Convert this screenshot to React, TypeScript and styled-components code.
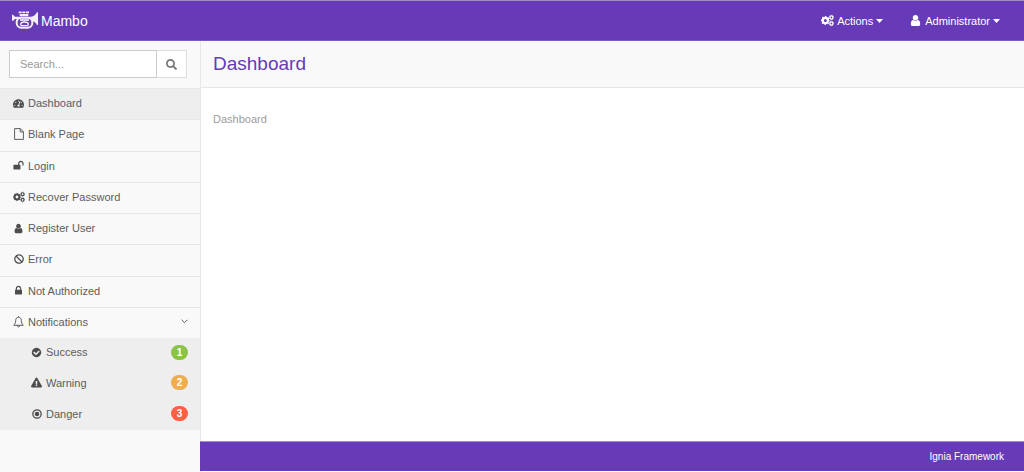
import React from 'react';
import styled, { createGlobalStyle } from 'styled-components';
import { FaTachometerAlt, FaBan, FaExclamationTriangle, FaSearch } from 'react-icons/fa';

const purple = '#673ab7';
const line = '#e7e7e7';

const GlobalStyle = createGlobalStyle`
  *, *::before, *::after { box-sizing: border-box; }
  body {
    margin: 0;
    background: #fff;
    color: #5c5c5c;
    font: 11px/16px "Liberation Sans", Arial, sans-serif;
  }
  button, input { font: inherit; color: inherit; }
  svg { display: block; flex: none; }
`;

const Page = styled.div`
  display: flex;
  flex-direction: column;
  min-height: 100vh;
`;

const TopBar = styled.header`
  display: flex;
  align-items: center;
  justify-content: space-between;
  height: 41px;
  padding: 0 24px 0 12px;
  border-top: 1px solid #a08fbc;
  border-bottom: 1px solid #7f58c2;
  background: ${purple};
  color: #fff;
`;

const Brand = styled.a`
  display: flex;
  align-items: center;
  gap: 3px;
  color: #fff;
  font-size: 14px;
  text-decoration: none;
`;

const TopMenu = styled.nav`
  display: flex;
  gap: 26px;
`;

const MenuButton = styled.button`
  display: flex;
  align-items: center;
  gap: 3px;
  padding: 0;
  border: 0;
  background: none;
  color: #fff;
  cursor: pointer;
`;

const Body = styled.div`
  display: flex;
  flex: 1;
`;

const Sidebar = styled.aside`
  width: 201px;
  flex: none;
  border-right: 1px solid ${line};
  background: #f9f9f9;
`;

const SearchForm = styled.form`
  display: flex;
  height: 47px;
  padding: 9px 13px 10px 9px;
`;

const SearchInput = styled.input`
  flex: 1;
  min-width: 0;
  padding: 0 10px;
  border: 1px solid #ccc;
  background: #fff;
  outline: none;

  &::placeholder { color: #999; opacity: 1; }
`;

const SearchButton = styled.button`
  display: grid;
  place-items: center;
  width: 30px;
  padding: 0;
  border: 1px solid #ddd;
  border-left: 0;
  background: #fff;
  color: #777;
`;

const NavList = styled.ul`
  display: grid;
  grid-auto-rows: 1fr;
  min-height: 250px;
  margin: 0;
  padding: 0;
  list-style: none;
`;

const SubList = styled(NavList)`
  min-height: 92px;
  background: #eee;
`;

const NavItem = styled.li`
  display: grid;
`;

const NavLink = styled.a<{ $active?: boolean }>`
  display: flex;
  align-items: center;
  gap: 4px;
  padding: 0 12px 2px 13px;
  border-top: 1px solid ${line};
  background: ${(p) => (p.$active ? '#eee' : 'transparent')};
  color: inherit;
  text-decoration: none;
`;

const SubLink = styled(NavLink)`
  padding-left: 31px;
  border-top: 0;
`;

const IconSlot = styled.span`
  display: grid;
  place-items: center;
  width: 11px;
  color: #4d4d4d;
`;

const Label = styled.span`
  flex: 1;
`;

const Badge = styled.span<{ $color: string }>`
  min-width: 17px;
  border-radius: 8px;
  background: ${(p) => p.$color};
  color: #fff;
  font-size: 10px;
  font-weight: 700;
  line-height: 15px;
  text-align: center;
`;

const Main = styled.main`
  display: flex;
  flex: 1;
  flex-direction: column;
  min-width: 0;
`;

const Heading = styled.h1`
  margin: 0;
  padding: 0 12px;
  border-bottom: 1px solid ${line};
  background: #f9f9f9;
  color: ${purple};
  font-size: 19px;
  font-weight: 400;
  line-height: 46px;
`;

const Content = styled.div`
  flex: 1;
  padding: 23px 12px;
  color: #9c9c9c;
`;

const Footer = styled.footer`
  margin: 0 0 1px -1px;
  padding: 0 20px;
  border-top: 1px solid #a58bd2;
  background: ${purple};
  color: #fff;
  font-size: 10px;
  line-height: 29px;
  text-align: right;
`;

const TrumpetLogo = () => (
  <svg width="26" height="20" viewBox="0 0 78 60" fill="none" stroke="#f3eefa" aria-hidden="true">
    <path d="M0 11h3l6 6h50c7-1 12-6 16-13h3v38h-3c-3-7-8-11-16-12V24H9l-5 5H0z" fill="#f3eefa" stroke="none" />
    <path d="M20 4h9M31 4h9M42 4h9" strokeWidth="5" />
    <path d="M23 12h26" strokeWidth="6" />
    <rect x="14" y="20" width="47" height="30" rx="14" fill="#673ab7" strokeWidth="6" />
    <path d="M24 27h27" strokeWidth="5" />
    <path d="M26 40c0-5 4-7 11-7s12 2 12 7-5 4-12 4-11 1-11-4z" strokeWidth="4" />
  </svg>
);

const PageIcon = () => (
  <svg width="10" height="12" viewBox="0 0 10 12" fill="none" stroke="currentColor" aria-hidden="true">
    <path d="M6.3.6H.6v10.8h8.8V3.7zM6.2.6v3.3h3.2" strokeWidth=".9" />
  </svg>
);

const BellIcon = () => (
  <svg width="11" height="12" viewBox="0 0 11 12" fill="none" stroke="currentColor" aria-hidden="true">
    <path
      d="M5.5 1.3C3.6 1.3 2.7 2.7 2.7 4.4 2.7 6.9 1.9 8.3.7 9.3h9.6C9.1 8.3 8.3 6.9 8.3 4.4 8.3 2.7 7.4 1.3 5.5 1.3zM5.5.3v1M4.3 9.5c0 .8.5 1.4 1.2 1.4s1.2-.6 1.2-1.4"
      strokeWidth=".9"
    />
  </svg>
);

const Glyph = ({ d, size }: { d: string; size: number }) => (
  <svg width={size} height={size} viewBox="0 0 1792 1792" fill="currentColor" aria-hidden="true">
    <path d={d} />
  </svg>
);

const userPath =
  'M1536 1399q0 109-62.5 187t-150.5 78h-854q-88 0-150.5-78t-62.5-187q0-85 8.5-160.5t31.5-152 58.5-131 94-89 134.5-34.5q131 128 313 128t313-128q76 0 134.5 34.5t94 89 58.5 131 31.5 152 8.5 160.5zm-256-887q0 159-112.5 271.5t-271.5 112.5-271.5-112.5-112.5-271.5 112.5-271.5 271.5-112.5 271.5 112.5 112.5 271.5z';
const lockPath =
  'M640 768h512v-192q0-106-75-181t-181-75-181 75-75 181v192zm832 96v576q0 40-28 68t-68 28h-960q-40 0-68-28t-28-68v-576q0-40 28-68t68-28h32v-192q0-184 132-316t316-132 316 132 132 316v192h32q40 0 68 28t28 68z';
const unlockPath =
  'M1728 576v256q0 26-19 45t-45 19h-64q-26 0-45-19t-19-45v-256q0-106-75-181t-181-75-181 75-75 181v192h96q40 0 68 28t28 68v576q0 40-28 68t-68 28h-960q-40 0-68-28t-28-68v-576q0-40 28-68t68-28h672v-192q0-185 131.5-316.5t316.5-131.5 316.5 131.5 131.5 316.5z';
const checkPath =
  'M1412 734q0-28-18-46l-91-90q-19-19-45-19t-45 19l-408 407-226-226q-19-19-45-19t-45 19l-91 90q-18 18-18 46 0 27 18 45l362 362q19 19 45 19 27 0 46-19l543-543q18-18 18-45zm252 162q0 209-103 385.5t-279.5 279.5-385.5 103-385.5-103-279.5-279.5-103-385.5 103-385.5 279.5-279.5 385.5-103 385.5 103 279.5 279.5 103 385.5z';

const Gear = ({ x, y, r }: { x: number; y: number; r: number }) => (
  <>
    <circle cx={x} cy={y} r={r * 0.6} strokeWidth={r * 0.5} />
    <circle cx={x} cy={y} r={r * 0.9} strokeWidth={r * 0.24} pathLength={16} strokeDasharray="1 1" strokeDashoffset=".5" />
  </>
);

const GearsIcon = ({ size }: { size: number }) => (
  <svg width={size} height={size} viewBox="0 0 30 28" fill="none" stroke="currentColor" aria-hidden="true">
    <Gear x={10} y={14} r={10} />
    <Gear x={24} y={7} r={6} />
    <Gear x={24} y={21} r={6} />
  </svg>
);

const TargetIcon = () => (
  <svg width="10" height="10" viewBox="0 0 20 20" fill="none" stroke="currentColor" aria-hidden="true">
    <circle cx="10" cy="10" r="8.3" strokeWidth="2.6" />
    <circle cx="10" cy="10" r="4.5" fill="currentColor" stroke="none" />
  </svg>
);

const Caret = () => (
  <svg width="7" height="4" viewBox="0 0 7 4" fill="currentColor" aria-hidden="true">
    <path d="M0 0h7L3.5 4z" />
  </svg>
);

const Chevron = () => (
  <svg width="7" height="5" viewBox="0 0 7 5" fill="none" stroke="currentColor" aria-hidden="true">
    <path d="M.6.8l2.9 2.9L6.4.8" />
  </svg>
);

const links = [
  { label: 'Dashboard', icon: <FaTachometerAlt size={11} />, active: true },
  { label: 'Blank Page', icon: <PageIcon /> },
  { label: 'Login', icon: <Glyph d={unlockPath} size={11} /> },
  { label: 'Recover Password', icon: <GearsIcon size={12} /> },
  { label: 'Register User', icon: <Glyph d={userPath} size={11} /> },
  { label: 'Error', icon: <FaBan size={10} /> },
  { label: 'Not Authorized', icon: <Glyph d={lockPath} size={11} /> },
];

const notices = [
  { label: 'Success', icon: <Glyph d={checkPath} size={11} />, count: 1, color: '#8bc34a' },
  { label: 'Warning', icon: <FaExclamationTriangle size={11} />, count: 2, color: '#f0ad4e' },
  { label: 'Danger', icon: <TargetIcon />, count: 3, color: '#ff5f45' },
];

export default function App() {
  return (
    <Page>
      <GlobalStyle />
      <TopBar>
        <Brand href="#">
          <TrumpetLogo />
          Mambo
        </Brand>
        <TopMenu aria-label="Account">
          <MenuButton type="button">
            <GearsIcon size={13} />
            <span>Actions</span>
            <Caret />
          </MenuButton>
          <MenuButton type="button">
            <Glyph d={userPath} size={13} />
            <span>Administrator</span>
            <Caret />
          </MenuButton>
        </TopMenu>
      </TopBar>
      <Body>
        <Sidebar>
          <SearchForm role="search">
            <SearchInput type="text" placeholder="Search..." aria-label="Search" />
            <SearchButton type="button" aria-label="Submit search">
              <FaSearch size={11} />
            </SearchButton>
          </SearchForm>
          <nav aria-label="Main">
            <NavList>
              {links.map((item) => (
                <NavItem key={item.label}>
                  <NavLink href="#" $active={item.active}>
                    <IconSlot>{item.icon}</IconSlot>
                    <Label>{item.label}</Label>
                  </NavLink>
                </NavItem>
              ))}
              <NavItem>
                <NavLink href="#" aria-expanded="true">
                  <IconSlot><BellIcon /></IconSlot>
                  <Label>Notifications</Label>
                  <Chevron />
                </NavLink>
              </NavItem>
            </NavList>
            <SubList>
              {notices.map((item) => (
                <NavItem key={item.label}>
                  <SubLink href="#">
                    <IconSlot>{item.icon}</IconSlot>
                    <Label>{item.label}</Label>
                    <Badge $color={item.color}>{item.count}</Badge>
                  </SubLink>
                </NavItem>
              ))}
            </SubList>
          </nav>
        </Sidebar>
        <Main>
          <Heading>Dashboard</Heading>
          <Content>Dashboard</Content>
          <Footer>Ignia Framework</Footer>
        </Main>
      </Body>
    </Page>
  );
}
